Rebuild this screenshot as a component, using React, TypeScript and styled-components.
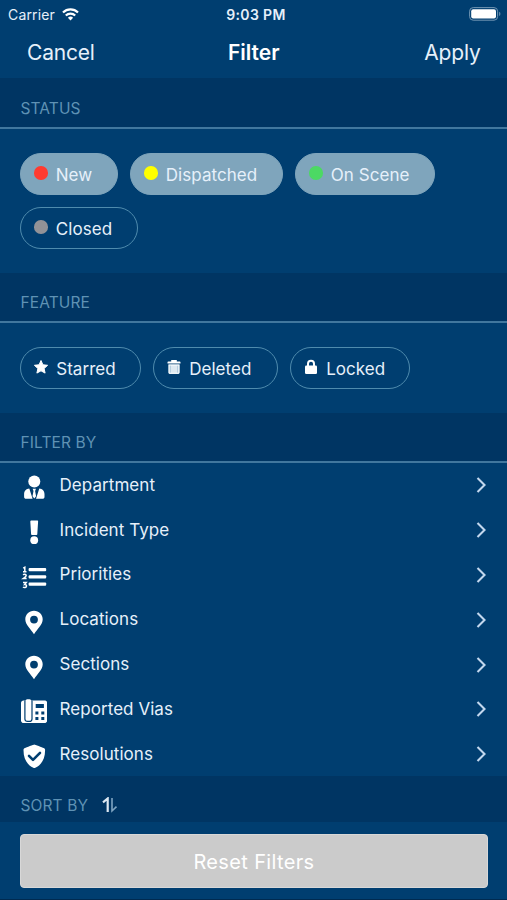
import React from "react";
import styled, { createGlobalStyle } from "styled-components";

const color = {
  body: "#003e70",
  band: "#003563",
  rule: "#41779e",
  muted: "#5f92b4",
  outline: "#4f8bad",
  chipOn: "#7fa5bc",
  text: "#e6f0fa",
  white: "#ffffff",
};

const GlobalStyle = createGlobalStyle`
  * { box-sizing: border-box; }
  body { margin: 0; background: ${color.body}; }
  button { font: inherit; color: inherit; background: none; border: 0; padding: 0; margin: 0; }
`;

const Screen = styled.div`
  width: 507px;
  height: 900px;
  display: flex;
  flex-direction: column;
  overflow: hidden;
  background: ${color.body};
  color: ${color.text};
  font-family: Inter, "Liberation Sans", sans-serif;
  white-space: nowrap;
`;

const StatusBar = styled.div`
  height: 27px;
  flex: none;
  display: grid;
  grid-template-columns: 1fr auto 1fr;
  align-items: center;
  padding: 1px 6px 0 8px;
`;

const Carrier = styled.div`
  display: flex;
  align-items: center;
  gap: 7px;
  font-size: 14px;
  letter-spacing: 0.15px;
`;

const Clock = styled.div`
  font-size: 14px;
  font-weight: 600;
  letter-spacing: 0.35px;
  padding-left: 3px;
`;

const BatterySlot = styled.div`
  display: flex;
  justify-content: flex-end;
`;

const NavBar = styled.header`
  height: 51px;
  flex: none;
  display: grid;
  grid-template-columns: 1fr auto 1fr;
  align-items: center;
  padding: 0 26.5px 0 27px;
`;

const NavButton = styled.button<{ $end?: boolean }>`
  font-size: 21px;
  letter-spacing: -0.2px;
  line-height: 26px;
  text-align: ${(p) => (p.$end ? "right" : "left")};
`;

const NavTitle = styled.h1`
  margin: 0;
  font-size: 21px;
  line-height: 26px;
  font-weight: 600;
  color: ${color.white};
`;

const SectionHeader = styled.h2<{ $height: number; $ruled?: boolean }>`
  height: ${(p) => p.$height}px;
  flex: none;
  display: flex;
  align-items: flex-end;
  gap: 14px;
  margin: 0;
  padding: 0 0 ${(p) => (p.$ruled ? "9px" : "7px")} 20.5px;
  background: ${color.band};
  border-bottom: ${(p) => (p.$ruled ? `2px solid ${color.rule}` : "0")};
  color: ${color.muted};
  font-size: 15.5px;
  line-height: 19px;
  font-weight: 400;
  letter-spacing: 0.1px;
`;

const SortIcon = styled.svg`
  width: 16px;
  height: 16px;
  margin-bottom: 2px;
  fill: none;
`;

const ChipArea = styled.div<{ $height: number }>`
  height: ${(p) => p.$height}px;
  flex: none;
  display: flex;
  flex-wrap: wrap;
  align-content: flex-start;
  gap: 12px;
  padding: 24px 20px 0 20.4px;
`;

const Chip = styled.button<{ $width: number; $on?: boolean }>`
  width: ${(p) => p.$width}px;
  height: 42px;
  display: flex;
  align-items: center;
  gap: 8.2px;
  padding: 1px 0 0 12.6px;
  border: 1.5px solid ${(p) => (p.$on ? color.chipOn : color.outline)};
  border-radius: 21px;
  background: ${(p) => (p.$on ? color.chipOn : "transparent")};
  font-size: 17px;
  letter-spacing: 0.05px;
`;

const Dot = styled.span<{ $color: string }>`
  width: 13.6px;
  height: 13.6px;
  flex: none;
  margin-top: -2.5px;
  border-radius: 50%;
  background: ${(p) => p.$color};
`;

const ChipIcon = styled.svg`
  width: 14px;
  height: 14px;
  flex: none;
  margin-top: -2.5px;
  overflow: visible;
`;

const List = styled.nav`
  height: 313px;
  flex: none;
  display: grid;
  grid-template-rows: repeat(7, 44.8px);
`;

const Row = styled.a`
  display: grid;
  grid-template-columns: 26px 1fr 12px;
  align-items: center;
  column-gap: 13px;
  padding: 0 20px 0 20.5px;
  font-size: 17px;
  letter-spacing: 0.06px;
`;

const RowLabel = styled.span`
  line-height: 22px;
  padding-bottom: 1px;
`;

const RowIcon = styled.svg`
  width: 26px;
  height: 26px;
  margin-top: 4px;
  fill: ${color.white};
`;

const Chevron = styled.svg`
  width: 12px;
  height: 18px;
  fill: none;
  stroke: #c3d8ee;
  stroke-width: 2.1;
`;

const Footer = styled.footer`
  flex: 1;
  padding: 12px 19.5px 0 20.4px;
  border-bottom: 1px solid #002a50;
`;

const ResetButton = styled.button`
  width: 100%;
  height: 54px;
  border: 1px solid #d8d8d8;
  border-radius: 4px;
  background: #cbcbcb;
  color: ${color.white};
  font-size: 20px;
  padding-top: 1px;
  letter-spacing: 0.35px;
`;

const Pin = () => (
  <path fillRule="evenodd" d="M13 1.8c-5 0-8.7 3.8-8.7 8.5 0 5.4 5.4 9.8 8.7 14.9 3.3-5.1 8.7-9.5 8.7-14.9 0-4.7-3.7-8.5-8.7-8.5Zm0 4.9a3.9 3.9 0 1 1 0 7.8 3.9 3.9 0 0 1 0-7.8Z" />
);

const rows: { label: string; icon: React.ReactNode }[] = [
  {
    label: "Department",
    icon: (
      <>
        <circle cx="13.3" cy="7.6" r="6" />
        <path d="M8.3 14.6 11.6 24.8H5.2c-1.3 0-2.1-.8-2.1-2.1v-2.4c0-3.3 2.1-5.4 5.2-5.7ZM18.3 14.6 15 24.8h6.4c1.3 0 2.1-.8 2.1-2.1v-2.4c0-3.3-2.1-5.4-5.2-5.7Z" />
        <path d="M11.6 14.8h3.4l-.9 2.3 1 5.2-1.8 2.3-1.8-2.3 1-5.2Z" />
      </>
    ),
  },
  {
    label: "Incident Type",
    icon: (
      <>
        <path d="M10.2 1.4h6c.6 0 1 .4.9 1l-.8 12.9c0 .5-.4.8-.9.8H11c-.5 0-.9-.3-.9-.8L9.3 2.4c0-.6.4-1 .9-1Z" />
        <circle cx="13.2" cy="21.2" r="3.9" />
      </>
    ),
  },
  {
    label: "Priorities",
    icon: (
      <>
        <rect x="7.6" y="4" width="17.6" height="3.3" rx="1" />
        <rect x="7.6" y="11.2" width="17.6" height="3.3" rx="1" />
        <rect x="7.6" y="18.4" width="17.6" height="3.3" rx="1" />
        <path
          d="M2.2 4.1 3.8 3.2V7.5M2 7.7h3.5M2.2 11c.8-1.1 3-.8 3 .6 0 1-1.2 1.7-3 3h3.4M2 18.5h3.2l-1.6 2c1.2-.1 1.9.5 1.9 1.5 0 1.6-2.3 2-3.5 1"
          fill="none"
          stroke="#fff"
          strokeWidth="1.5"
        />
      </>
    ),
  },
  { label: "Locations", icon: <Pin /> },
  { label: "Sections", icon: <Pin /> },
  {
    label: "Reported Vias",
    icon: (
      <>
        <path d="M2.6 2.5h21c1.5 0 2.6 1 2.6 2.5v17.4c0 1.5-1 2.6-2.6 2.6h-21C1.1 25 0 23.9 0 22.4V5c0-1.5 1-2.5 2.6-2.5Z" />
        <rect x="4.6" y="1.2" width="5.6" height="19.8" rx="1.6" />
        <path d="M11 2.6v18.3c0 1.6-1.2 2.5-2.7 2.5H6.5c-1.5 0-2.6-.9-2.6-2.5V2.6" fill="none" stroke={color.body} strokeWidth="1.2" />
        <path d="M14.7 6.1h8.2v4h-8.2zM14.4 13.5h3v3h-3zM20.3 13.5h3v3h-3zM14.4 19h3v3h-3zM20.3 19h3v3h-3z" fill={color.body} />
      </>
    ),
  },
  {
    label: "Resolutions",
    icon: (
      <>
        <path d="M13.3 1.4c.4 0 8.2 3.1 9.3 3.6.9.4 1.5 1 1.5 2 0 9.6-4.1 15.2-9.8 17.8-.7.3-1.3.3-2 0C6.7 22.2 2.5 16.6 2.5 7c0-1 .6-1.6 1.5-2 1.1-.5 8.9-3.6 9.3-3.6Z" />
        <path d="m8 12.9 4 4 7-7" fill="none" stroke={color.body} strokeWidth="2.6" strokeLinecap="round" strokeLinejoin="round" />
      </>
    ),
  },
];

const statuses = [
  { label: "New", dot: "#ff3b30", width: 98, on: true },
  { label: "Dispatched", dot: "#ffff00", width: 153, on: true },
  { label: "On Scene", dot: "#4cd964", width: 139.5, on: true },
  { label: "Closed", dot: "#929297", width: 117.5, on: false },
];

const features = [
  {
    label: "Starred",
    width: 121,
    icon: (
      <path
        fill="#fff"
        stroke="#fff"
        strokeWidth="1"
        strokeLinejoin="round"
        d="m7 .5 1.9 4.3 4.7.5-3.5 3.2 1 4.6L7 10.8l-4.1 2.3 1-4.6L.4 5.3l4.7-.5Z"
      />
    ),
  },
  {
    label: "Deleted",
    width: 125,
    icon: (
      <>
        <path fill="#fff" d="M4.2 0h5.6v1.4h2.9c.5 0 .8.3.8.8v1.2H.5V2.2c0-.5.3-.8.8-.8h2.9Z" />
        <path fill="#b6cee0" d="M1.5 4.5h11v8c0 .8-.5 1.4-1.4 1.4H2.9c-.9 0-1.4-.6-1.4-1.4Z" />
        <path d="M2.1 4.6v7.9c0 .5.3.8.8.8h8.2c.5 0 .8-.3.8-.8V4.6M1.5 5h11M5 5v8M7 5v8M9 5v8" fill="none" stroke="#fff" strokeWidth="1.1" />
      </>
    ),
  },
  {
    label: "Locked",
    width: 120,
    icon: (
      <>
        <path d="M4 6.5V3.8a3 3 0 0 1 6 0v2.7" fill="none" stroke="#fff" strokeWidth="2" />
        <rect x="1" y="5.6" width="12" height="8.4" rx="1.3" fill="#fff" />
      </>
    ),
  },
];

export default function App() {
  return (
    <>
      <GlobalStyle />
      <Screen>
        <StatusBar>
          <Carrier>
            Carrier
            <svg width="17" height="13" viewBox="0 0 17 13" fill="none" stroke="#fff" strokeWidth="2.2">
              <path d="M1 4.5a10.6 10.6 0 0 1 15 0M3.8 7.5a6.7 6.7 0 0 1 9.4 0" />
              <path d="M5.9 9.8a3.7 3.7 0 0 1 5.2 0l-2.6 2.7Z" fill="#fff" stroke="none" />
            </svg>
          </Carrier>
          <Clock>9:03 PM</Clock>
          <BatterySlot>
            <svg width="32" height="14" viewBox="0 0 32 14">
              <rect x=".6" y=".6" width="28" height="12.6" rx="3.6" fill="none" stroke="#7195b3" strokeWidth="1" />
              <rect x="2.2" y="2.2" width="24.8" height="9.4" rx="2" fill="#fff" />
              <path d="M30.2 4.8c1.6.6 1.6 3.6 0 4.2Z" fill="#7195b3" />
            </svg>
          </BatterySlot>
        </StatusBar>

        <NavBar>
          <NavButton>Cancel</NavButton>
          <NavTitle>Filter</NavTitle>
          <NavButton $end>Apply</NavButton>
        </NavBar>

        <SectionHeader $height={51} $ruled>STATUS</SectionHeader>
        <ChipArea $height={144}>
          {statuses.map((s) => (
            <Chip key={s.label} $width={s.width} $on={s.on}>
              <Dot $color={s.dot} />
              {s.label}
            </Chip>
          ))}
        </ChipArea>

        <SectionHeader $height={50} $ruled>FEATURE</SectionHeader>
        <ChipArea $height={90}>
          {features.map((f) => (
            <Chip key={f.label} $width={f.width}>
              <ChipIcon viewBox="0 0 14 14">{f.icon}</ChipIcon>
              {f.label}
            </Chip>
          ))}
        </ChipArea>

        <SectionHeader $height={50} $ruled>FILTER BY</SectionHeader>
        <List>
          {rows.map((r) => (
            <Row key={r.label}>
              <RowIcon viewBox="0 0 26 26">{r.icon}</RowIcon>
              <RowLabel>{r.label}</RowLabel>
              <Chevron viewBox="0 0 12 18">
                <path d="m2.5 2 7 7-7 7" />
              </Chevron>
            </Row>
          ))}
        </List>

        <SectionHeader $height={46}>
          SORT BY
          <SortIcon viewBox="0 0 16 16">
            <path d="M1 5.3 5.7 1.5V15" stroke="#dce8f2" strokeWidth="2.2" />
            <path d="M10 1v13l4.5-4.3" stroke="#7fa5c2" strokeWidth="1.6" />
          </SortIcon>
        </SectionHeader>
        <Footer>
          <ResetButton>Reset Filters</ResetButton>
        </Footer>
      </Screen>
    </>
  );
}
